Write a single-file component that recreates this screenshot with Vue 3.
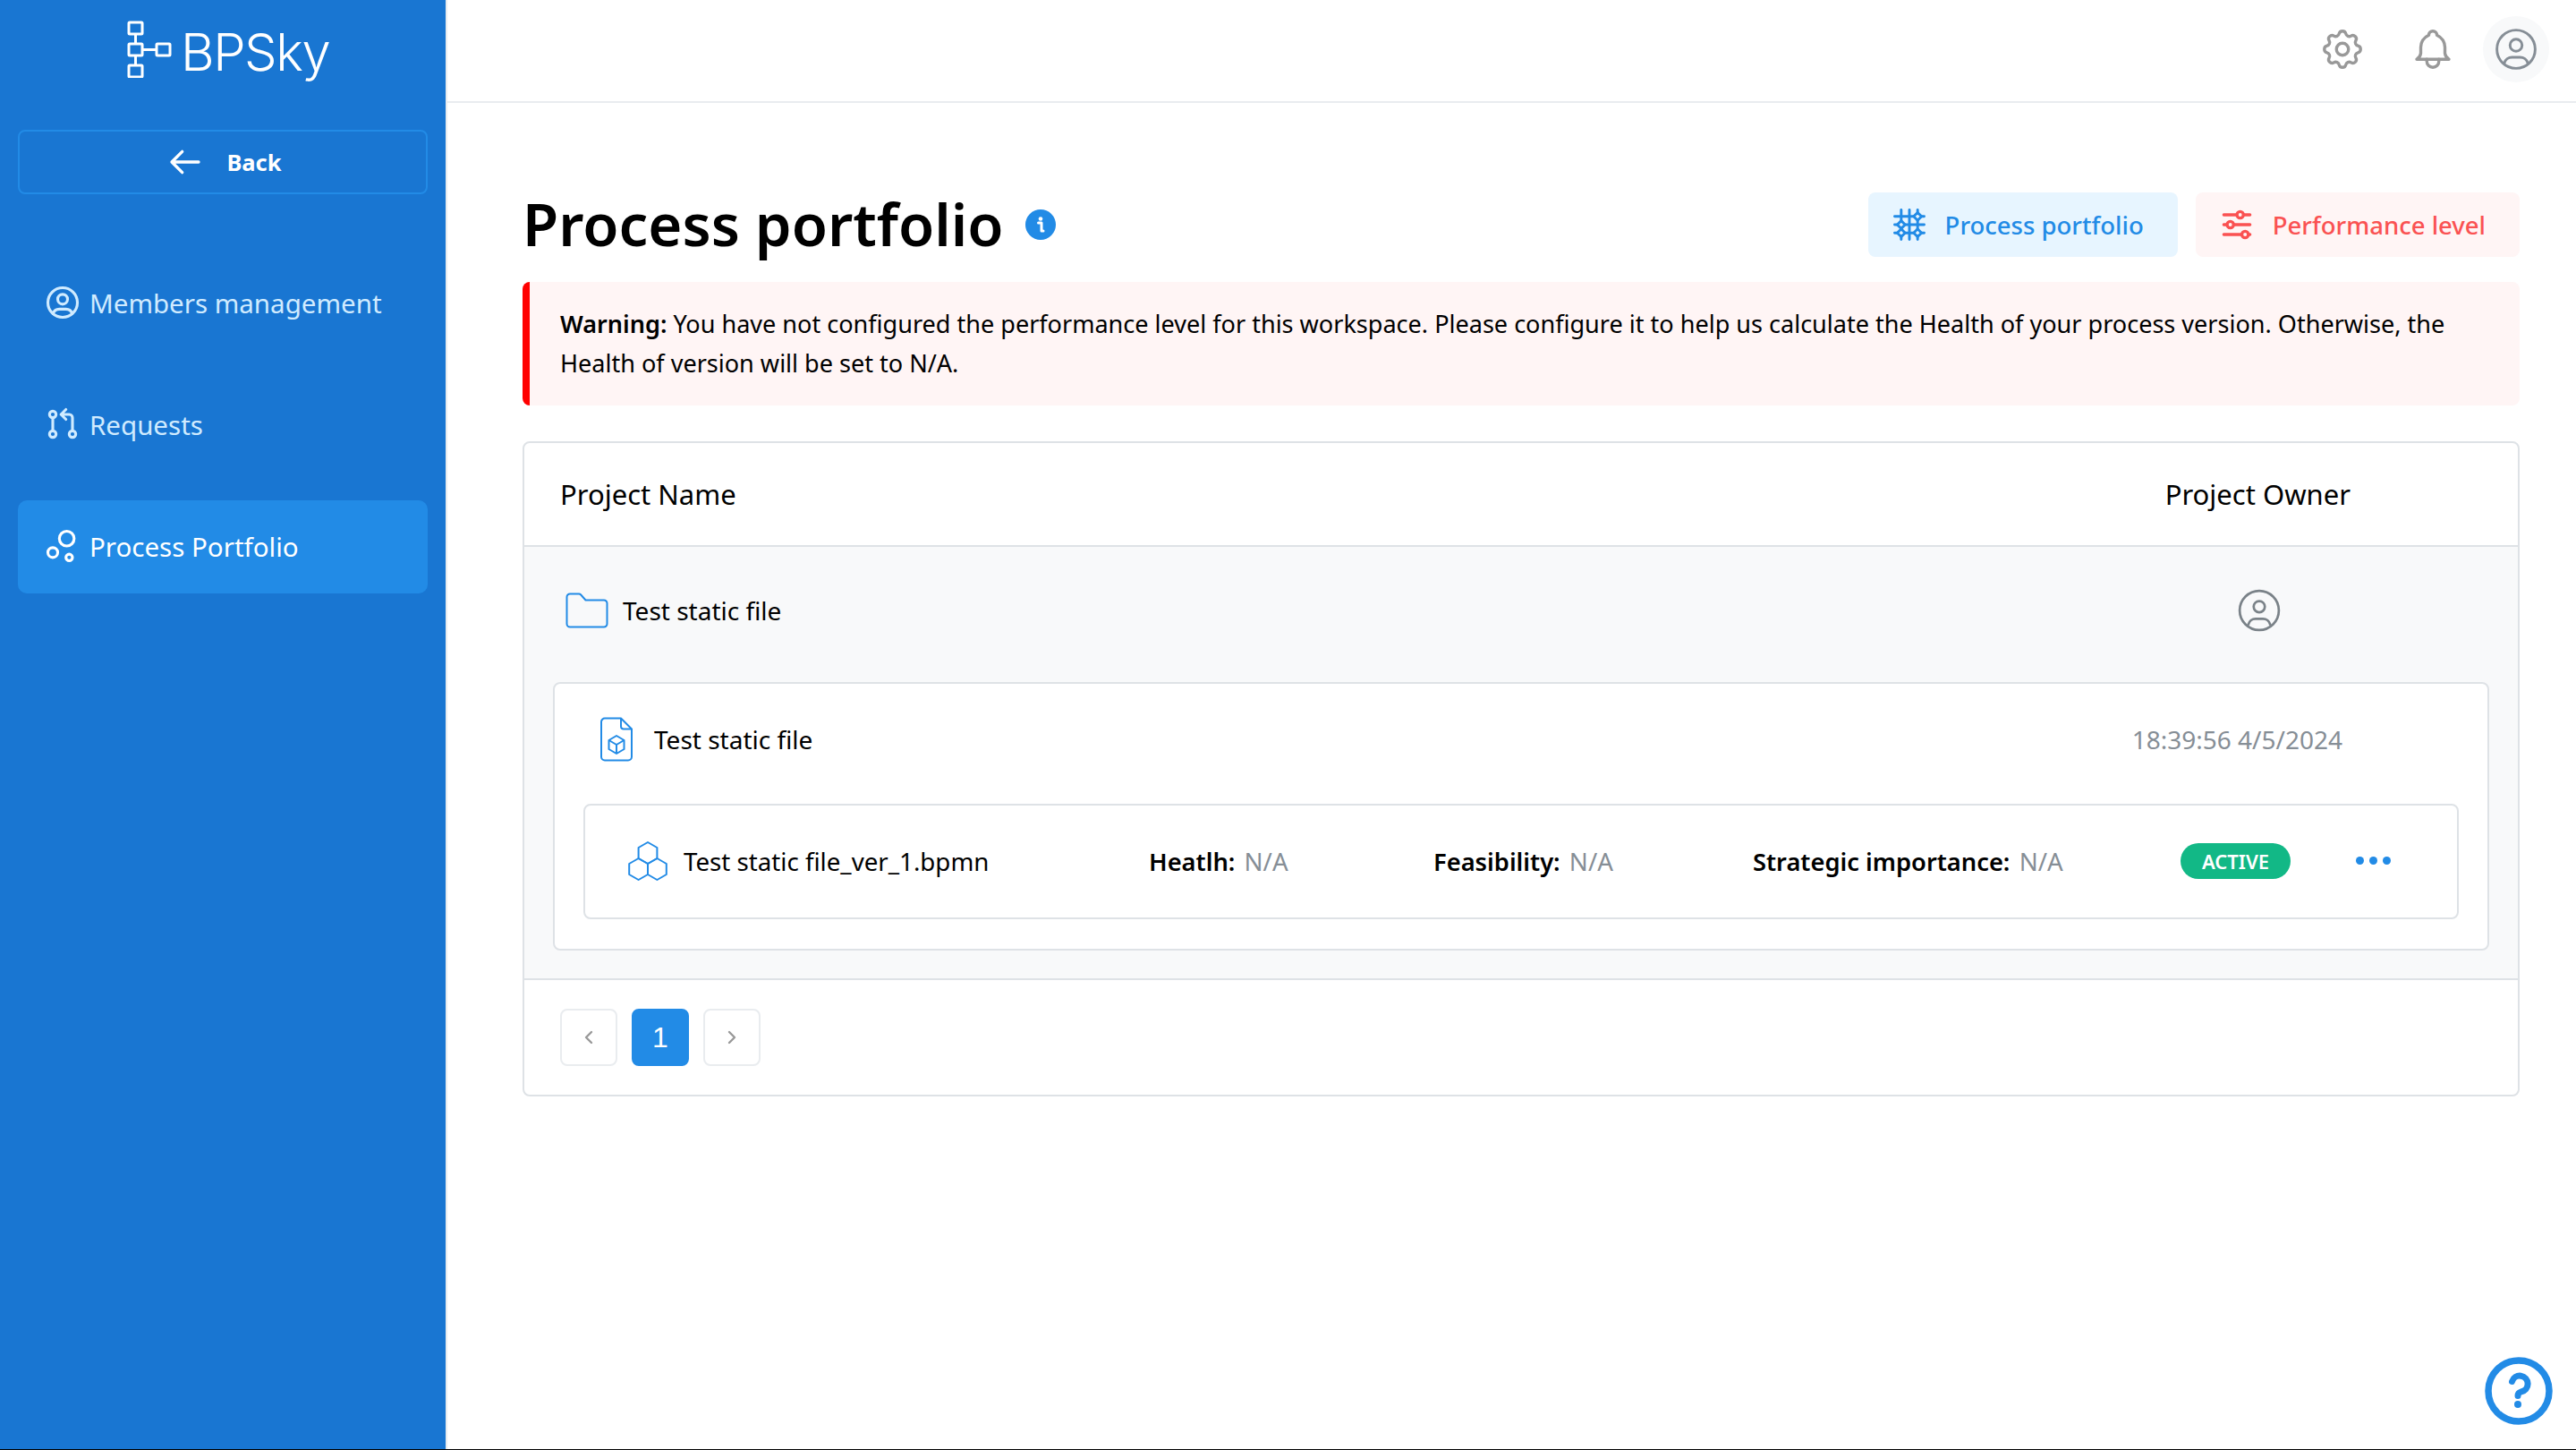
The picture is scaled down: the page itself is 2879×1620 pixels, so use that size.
<template>
  <div class="page">
    <aside class="sidebar">
      <div class="logo">
        <svg class="logo-mark" viewBox="0 0 50 64" fill="none" stroke="#fff" stroke-width="3">
          <rect x="2" y="2" width="15" height="13" rx="1" />
          <rect x="2" y="26" width="15" height="13" rx="1" />
          <rect x="2" y="50" width="15" height="13" rx="1" />
          <rect x="33" y="26" width="15" height="13" rx="1" />
          <path d="M9.500 15v11M9.500 39v11M17 32.500h16" />
        </svg>
        <span class="logo-text">BPSky</span>
      </div>
      <button class="back">
        <svg class="back-icon" viewBox="0 0 24 24" fill="none" stroke="#fff" stroke-width="2" stroke-linecap="round" stroke-linejoin="round">
          <path d="M3 12h18M3 12l7 7M3 12l7-7" />
        </svg>
        <span>Back</span>
      </button>
      <nav class="nav">
        <a class="nav-item">
          <svg class="nav-icon" viewBox="0 0 24 24" fill="none" stroke="currentColor" stroke-width="1.700" stroke-linecap="round" stroke-linejoin="round">
            <circle cx="12" cy="12" r="9" /><circle cx="12" cy="10" r="3" />
            <path d="M6.168 18.849a4 4 0 0 1 3.832-2.849h4a4 4 0 0 1 3.834 2.855" />
          </svg>
          Members management
        </a>
        <a class="nav-item">
          <svg class="nav-icon" viewBox="0 0 24 24" fill="none" stroke="currentColor" stroke-width="1.700" stroke-linecap="round" stroke-linejoin="round">
            <circle cx="6" cy="18" r="2" /><circle cx="6" cy="6" r="2" /><circle cx="18" cy="18" r="2" />
            <path d="M6 8v8M11 6h5a2 2 0 0 1 2 2v8M14 9l-3-3l3-3" />
          </svg>
          Requests
        </a>
        <a class="nav-item active">
          <svg class="nav-icon" viewBox="0 0 24 24" fill="none" stroke="currentColor" stroke-width="1.700" stroke-linecap="round" stroke-linejoin="round">
            <circle cx="6" cy="16" r="3" /><circle cx="16" cy="19" r="2" /><circle cx="14.500" cy="7.500" r="4.500" />
          </svg>
          Process Portfolio
        </a>
      </nav>
    </aside>

    <div class="content">
      <header class="topbar">
        <svg class="top-icon gear" viewBox="0 0 24 24" fill="none" stroke="currentColor" stroke-width="1.500" stroke-linecap="round" stroke-linejoin="round">
          <path d="M10.325 4.317c.426-1.756 2.924-1.756 3.35 0a1.724 1.724 0 0 0 2.573 1.066c1.543-.94 3.31.826 2.37 2.37a1.724 1.724 0 0 0 1.065 2.572c1.756.426 1.756 2.924 0 3.35a1.724 1.724 0 0 0-1.066 2.573c.94 1.543-.826 3.31-2.37 2.37a1.724 1.724 0 0 0-2.572 1.065c-.426 1.756-2.924 1.756-3.35 0a1.724 1.724 0 0 0-2.573-1.066c-1.543.94-3.31-.826-2.37-2.37a1.724 1.724 0 0 0-1.065-2.572c-1.756-.426-1.756-2.924 0-3.35a1.724 1.724 0 0 0 1.066-2.573c-.94-1.543.826-3.31 2.37-2.37c1 .608 2.296.07 2.572-1.065z" />
          <circle cx="12" cy="12" r="3" />
        </svg>
        <svg class="top-icon bell" viewBox="0 0 24 24" fill="none" stroke="currentColor" stroke-width="1.500" stroke-linecap="round" stroke-linejoin="round">
          <path d="M10 5a2 2 0 1 1 4 0a7 7 0 0 1 4 6v3a4 4 0 0 0 2 3h-16a4 4 0 0 0 2-3v-3a7 7 0 0 1 4-6" />
          <path d="M9 17v1a3 3 0 0 0 6 0v-1" />
        </svg>
        <div class="avatar">
          <svg viewBox="0 0 24 24" fill="none" stroke="currentColor" stroke-width="1.300" stroke-linecap="round" stroke-linejoin="round">
            <circle cx="12" cy="12" r="9.500" /><circle cx="12" cy="10" r="3" />
            <path d="M6.168 18.849a4 4 0 0 1 3.832-2.849h4a4 4 0 0 1 3.834 2.855" />
          </svg>
        </div>
      </header>

      <main class="main">
        <div class="title-row">
          <h1>Process portfolio</h1>
          <svg class="info" viewBox="0 0 34 34">
            <circle cx="17" cy="17" r="17" fill="#228be6" />
            <circle cx="17" cy="10.500" r="2.300" fill="#fff" />
            <path d="M14.500 15h3.500v9h2" fill="none" stroke="#fff" stroke-width="3" stroke-linecap="round" stroke-linejoin="round" />
          </svg>
          <div class="actions">
            <button class="btn blue">
              <svg viewBox="0 0 24 24" fill="none" stroke="currentColor" stroke-width="1.600" stroke-linecap="round" stroke-linejoin="round">
                <path d="M3 7h18M3 12h18M3 17h18M7 3v18M12 3v18M17 3v18" />
                <path d="M17 4.600l2.400 2.400l-2.400 2.400l-2.400-2.400zM7 9.600l2.400 2.400l-2.400 2.400l-2.400-2.400zM7 14.600l2.400 2.400l-2.400 2.400l-2.400-2.400zM17 14.600l2.400 2.400l-2.400 2.400l-2.400-2.400z" fill="#e7f5ff" />
              </svg>
              Process portfolio
            </button>
            <button class="btn red">
              <svg viewBox="0 0 24 24" fill="none" stroke="currentColor" stroke-width="1.800" stroke-linecap="round" stroke-linejoin="round">
                <circle cx="14" cy="6" r="2" /><path d="M4 6h8M16 6h4" />
                <circle cx="8" cy="12" r="2" /><path d="M4 12h2M10 12h10" />
                <circle cx="17" cy="18" r="2" /><path d="M4 18h11M19 18h1" />
              </svg>
              Performance level
            </button>
          </div>
        </div>

        <div class="alert">
          <strong>Warning:</strong> You have not configured the performance level for this workspace. Please configure it to help us calculate the Health of your process version. Otherwise, the Health of version will be set to N/A.
        </div>

        <section class="table">
          <div class="thead">
            <span>Project Name</span>
            <span class="owner">Project Owner</span>
          </div>
          <div class="project">
            <div class="project-row">
              <svg class="folder" viewBox="0 0 48 40" fill="none" stroke="#228be6" stroke-width="2" stroke-linejoin="round">
                <path d="M5 1.500h10a3 3 0 0 1 2.200 1l5.300 6h20.500a3.500 3.500 0 0 1 3.500 3.500v23a3.500 3.500 0 0 1-3.500 3.500h-38a3.500 3.500 0 0 1-3.500-3.500v-30a3.500 3.500 0 0 1 3.500-3.500z" />
              </svg>
              <span class="project-name">Test static file</span>
              <svg class="owner-icon" viewBox="0 0 24 24" fill="none" stroke="#7a8288" stroke-width="1.300" stroke-linecap="round" stroke-linejoin="round">
                <circle cx="12" cy="12" r="10.500" /><circle cx="12" cy="10" r="3" />
                <path d="M6.168 19.500a4 4 0 0 1 3.832-3h4a4 4 0 0 1 3.834 3" />
              </svg>
            </div>
            <div class="process">
              <div class="process-row">
                <svg class="file" viewBox="0 0 38 50" fill="none" stroke="#228be6" stroke-width="2" stroke-linejoin="round">
                  <path d="M24 1.500h-18a4 4 0 0 0-4 4v39a4 4 0 0 0 4 4h26a4 4 0 0 0 4-4v-31z" />
                  <path d="M24 1.500v9a3 3 0 0 0 3 3h9" />
                  <path d="M19 21l8.500 5v10l-8.500 5l-8.500-5v-10z" />
                  <path d="M10.500 26l8.500 5l8.500-5M19 31v10" />
                </svg>
                <span class="process-name">Test static file</span>
                <span class="date">18:39:56 4/5/2024</span>
              </div>
              <div class="version">
                <svg class="hex" viewBox="0 0 46 44" fill="none" stroke="#228be6" stroke-width="2" stroke-linejoin="round">
                  <path d="M23 1l10.400 6v12l-10.400 6l-10.400-6v-12z" />
                  <path d="M12.600 19l10.400 6v12l-10.400 6l-10.400-6v-12z" />
                  <path d="M33.400 19l10.400 6v12l-10.400 6l-10.400-6v-12z" />
                </svg>
                <span class="version-name">Test static file_ver_1.bpmn</span>
                <span class="metric health"><b>Heatlh:</b> <i>N/A</i></span>
                <span class="metric feasibility"><b>Feasibility:</b> <i>N/A</i></span>
                <span class="metric strategic"><b>Strategic importance:</b> <i>N/A</i></span>
                <span class="badge">ACTIVE</span>
                <span class="dots"><em></em><em></em><em></em></span>
              </div>
            </div>
          </div>
          <div class="pager">
            <button class="page-btn">
              <svg viewBox="0 0 24 24" fill="none" stroke="#999" stroke-width="2.400" stroke-linecap="round" stroke-linejoin="round"><path d="M15 6l-6 6l6 6" /></svg>
            </button>
            <button class="page-btn current">1</button>
            <button class="page-btn">
              <svg viewBox="0 0 24 24" fill="none" stroke="#999" stroke-width="2.400" stroke-linecap="round" stroke-linejoin="round"><path d="M9 6l6 6l-6 6" /></svg>
            </button>
          </div>
        </section>
      </main>
    </div>

    <svg class="help" viewBox="0 0 76 76" fill="none" stroke="#228be6" stroke-linecap="round" stroke-linejoin="round">
      <circle cx="38" cy="38" r="34" stroke-width="7.500" />
      <path d="M30.500 27.500a9 9 0 1 1 10 11.500q-3.500 1-3.500 4.500" stroke-width="7" />
      <path d="M37 53v.01" stroke-width="8" />
    </svg>
  </div>
</template>

<script setup>
</script>

<style>
html, body { background: #000; }
</style>

<style scoped>
.page {
  display: flex;
  height: 1619px;
  background: #fff;
  font-family: "Noto Sans", sans-serif;
  color: #000;
  overflow: hidden;
  position: relative;
}

.sidebar {
  width: 498px;
  flex: none;
  box-sizing: content-box;
  background: #1976d2;
  border-right: 2px solid #e9ecef;
  padding: 0;
}

.logo {
  height: 113px;
  display: flex;
  align-items: flex-start;
  padding: 23px 0 0 142px;
  box-sizing: border-box;
  gap: 10px;
}
.logo-mark { width: 50px; height: 64px; }
.logo-text {
  font-family: Inter, sans-serif;
  font-weight: 300;
  font-size: 58px;
  line-height: 64px;
  margin-top: 3px;
  letter-spacing: -1.500px;
  color: #fff;
}

.back {
  display: flex;
  align-items: center;
  justify-content: center;
  gap: 26px;
  width: 458px;
  height: 72px;
  margin: 32px 0 0 20px;
  padding: 0 0 0 4px;
  background: transparent;
  border: 2px solid #228be6;
  border-radius: 8px;
  color: #fff;
  font: 700 25.500px "Noto Sans", sans-serif;
}
.back-icon { width: 40px; height: 40px; }

.nav {
  display: flex;
  flex-direction: column;
  gap: 32px;
  margin: 70px 20px 0;
}
.nav-item {
  display: flex;
  align-items: center;
  gap: 8px;
  height: 102px;
  padding: 0 0 2px 28px;
  border-radius: 10px;
  color: #d0ebff;
  font-size: 29.500px;
}
.nav-item.active { background: #228be6; color: #fff; }
.nav-icon { width: 44px; height: 44px; flex: none; }

.content {
  flex: 1;
  min-width: 0;
  display: flex;
  flex-direction: column;
}

.topbar {
  height: 109px;
  flex: none;
  box-sizing: content-box;
  padding: 0 30px 4px 0;
  border-bottom: 2px solid #e9ecef;
  display: flex;
  align-items: center;
  justify-content: flex-end;
  color: #999;
}
.top-icon { width: 54px; height: 54px; }
.bell { margin-left: 47px; }
.avatar {
  width: 74px;
  height: 74px;
  margin-left: 29px;
  border-radius: 50%;
  background: #f8f9fa;
  display: flex;
  align-items: center;
  justify-content: center;
  color: #868e96;
}
.avatar svg { width: 54px; height: 54px; }

.main { padding: 100px 63px 0 84px; }

.title-row {
  display: flex;
  align-items: center;
  height: 72px;
}
h1 {
  margin: -2px 0 0;
  font-size: 65.300px;
  line-height: 72px;
  font-weight: 600;
}
.info { width: 34px; height: 34px; margin-left: 24px; }
.actions {
  margin-left: auto;
  display: flex;
  gap: 20px;
}
.btn {
  display: flex;
  align-items: center;
  gap: 18px;
  height: 72px;
  padding: 0 38px 0 24px;
  border: none;
  border-radius: 8px;
  font: 500 27.500px "Noto Sans", sans-serif;
}
.btn svg { width: 44px; height: 44px; }
.btn.blue { background: #e7f5ff; color: #228be6; }
.btn.red { background: #fff5f5; color: #fa5252; }

.alert {
  margin-top: 28px;
  background: #fff5f5;
  border-left: 8px solid #f00;
  border-radius: 8px;
  padding: 25px 36px 25px 34px;
  font-size: 27.050px;
  line-height: 44px;
}
.alert strong { font-weight: 600; }

.table {
  margin-top: 40px;
  border: 2px solid #dee2e6;
  border-radius: 8px;
}
.thead {
  display: flex;
  align-items: center;
  justify-content: space-between;
  height: 114px;
  padding: 0 187px 0 40px;
  font-size: 31px;
  border-bottom: 2px solid #dee2e6;
}
.project {
  background: #f8f9fa;
  padding: 0 32px 31px;
  border-bottom: 2px solid #dee2e6;
}
.project-row {
  display: flex;
  align-items: center;
  height: 141px;
  padding: 0 0 10px 14px;
}
.folder { width: 48px; height: 40px; flex: none; }
.project-name { margin-left: 16px; font-size: 28px; }
.owner-icon { width: 50px; height: 50px; margin-left: auto; margin-right: 232px; }

.process {
  background: #fff;
  border: 2px solid #dee2e6;
  border-radius: 8px;
  padding: 0 32px 33px;
}
.process-row {
  display: flex;
  align-items: center;
  height: 123px;
  padding: 0 0 11px 18px;
}
.file { width: 38px; height: 50px; flex: none; }
.process-name { margin-left: 23px; font-size: 28px; }
.date { margin-left: auto; margin-right: 130px; font-size: 28px; color: #868e96; }

.version {
  display: flex;
  align-items: center;
  height: 123px;
  border: 2px solid #dee2e6;
  border-radius: 8px;
  padding: 0 0 2px 47px;
  font-size: 27.700px;
}
.hex { width: 46px; height: 44px; flex: none; }
.version-name { margin-left: 17px; width: 520px; flex: none; }
.metric b { font-weight: 600; font-size: 27.300px; }
.metric i { font-style: normal; color: #868e96; margin-left: 3px; }
.health { width: 318px; flex: none; }
.feasibility { width: 357px; flex: none; }
.strategic { width: 478px; flex: none; }
.badge {
  width: 123px;
  height: 40px;
  border-radius: 20px;
  background: #12b886;
  color: #fff;
  font-size: 22px;
  font-weight: 600;
  line-height: 40px;
  text-align: center;
  flex: none;
}
.dots { display: flex; gap: 6px; margin-left: 73px; }
.dots em { width: 9px; height: 9px; border-radius: 50%; background: #228be6; }

.pager {
  display: flex;
  gap: 16px;
  padding: 32px 40px;
}
.page-btn {
  width: 64px;
  height: 64px;
  padding: 0;
  display: flex;
  align-items: center;
  justify-content: center;
  background: #fff;
  border: 2px solid #e9ecef;
  border-radius: 8px;
}
.page-btn svg { width: 24px; height: 24px; }
.page-btn.current {
  background: #228be6;
  border-color: #228be6;
  color: #fff;
  font: 400 32px "Liberation Sans", sans-serif;
}

.help {
  position: absolute;
  right: 26px;
  top: 1516px;
  width: 76px;
  height: 76px;
}
</style>
